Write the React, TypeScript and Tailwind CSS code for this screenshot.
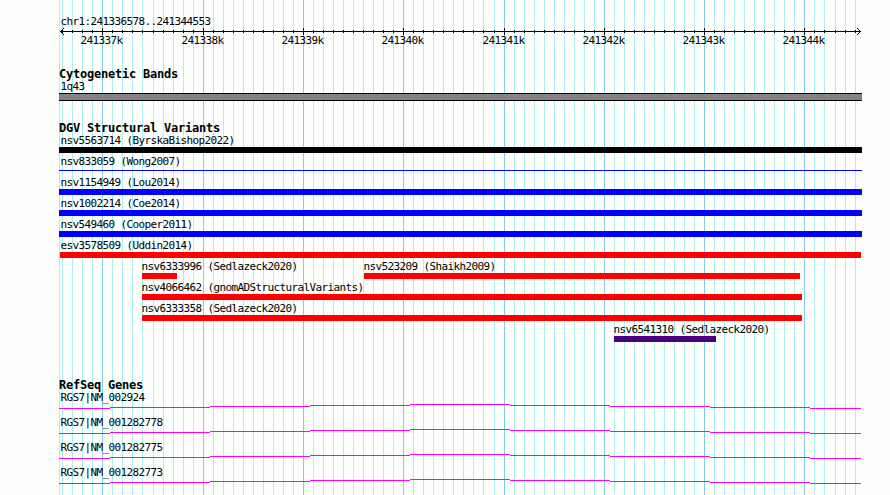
import React from "react";

type Feature = {
  name: string;
  start: number;
  end: number;
  color: string;
  thin?: boolean;
  inset?: number;
};

const LEFT = 59;
const RIGHT = 862;

// One grid line every 100 bp, the scale is slightly over 10px per step
const gridLines = Array.from({ length: 80 }, (_, i) => {
  const shift = (i >= 9 ? 1 : 0) + (i >= 43 ? 1 : 0) + (i >= 77 ? 1 : 0);
  return { x: 62 + i * 10 + shift, major: i % 10 === 4 };
});

const majorLines = gridLines.filter((line) => line.major);

const variantRows: Feature[][] = [
  [{ name: "nsv5563714 (ByrskaBishop2022)", start: 59, end: 862, color: "bg-black", inset: 1.5 }],
  [{ name: "nsv833059 (Wong2007)", start: 59, end: 862, color: "bg-[#0000ff]", thin: true, inset: 1.5 }],
  [{ name: "nsv1154949 (Lou2014)", start: 59, end: 862, color: "bg-[#0000ff]", inset: 1.5 }],
  [{ name: "nsv1002214 (Coe2014)", start: 59, end: 862, color: "bg-[#0000ff]", inset: 1.5 }],
  [{ name: "nsv549460 (Cooper2011)", start: 59, end: 862, color: "bg-[#0000ff]", inset: 1.5 }],
  [{ name: "esv3578509 (Uddin2014)", start: 60, end: 861, color: "bg-[#ff0000]", inset: 0.5 }],
  [
    { name: "nsv6333996 (Sedlazeck2020)", start: 142, end: 177, color: "bg-[#ff0000]", inset: -0.5 },
    { name: "nsv523209 (Shaikh2009)", start: 364, end: 800, color: "bg-[#ff0000]", inset: -0.5 },
  ],
  [{ name: "nsv4066462 (gnomADStructuralVariants)", start: 142, end: 802, color: "bg-[#ff0000]", inset: -0.5 }],
  [{ name: "nsv6333358 (Sedlazeck2020)", start: 142, end: 802, color: "bg-[#ff0000]", inset: -0.5 }],
  [{ name: "nsv6541310 (Sedlazeck2020)", start: 614, end: 716, color: "bg-[#4b0082]", inset: -0.5 }],
];

const genes = [
  "RGS7|NM_002924",
  "RGS7|NM_001282778",
  "RGS7|NM_001282775",
  "RGS7|NM_001282773",
];

// Stepped intron line, x of each break and its height
const intronSteps = [
  [0, 51, 4],
  [51, 151, 3],
  [151, 251, 2],
  [251, 351, 1],
  [351, 451, 0],
  [451, 551, 1],
  [551, 651, 2],
  [651, 751, 3],
  [751, 802, 4],
];

function Grid() {
  return (
    <svg className="absolute inset-0" width="890" height="495" shapeRendering="crispEdges">
      <rect x={LEFT} y="0" width="1" height="495" fill="#afeeee" />
      {gridLines.map(({ x, major }) => (
        <rect key={x} x={x} y="0" width="1" height="495" fill={major ? "#87ceeb" : "#afeeee"} />
      ))}
    </svg>
  );
}

function Ruler() {
  return (
    <div className="h-[67px] pt-[15px]">
      <p className="ml-[60.5px] h-[12px]">chr1:241336578..241344553</p>
      <svg className="block" width="890" height="8" shapeRendering="crispEdges">
        <rect x="60" y="4" width="801" height="1" />
        {gridLines.map(({ x, major }) => (
          <rect key={x} x={x} y={major ? 1 : 3} width="1" height={major ? 7 : 3} />
        ))}
        <path d="M61 3h1v1h-1zM62 2h1v1h-1zM63 1h1v1h-1zM61 5h1v1h-1zM62 6h1v1h-1zM63 7h1v1h-1z" />
        <path d="M859 3h1v1h-1zM858 2h1v1h-1zM857 1h1v1h-1zM859 5h1v1h-1zM858 6h1v1h-1zM857 7h1v1h-1z" />
      </svg>
      <div className="ml-[80.5px] -mt-px flex">
        {majorLines.map(({ x }, i) => (
          <span
            key={x}
            className="shrink-0"
            style={{ width: i < majorLines.length - 1 ? majorLines[i + 1].x - x : 42 }}
          >
            {241337 + i}k
          </span>
        ))}
      </div>
    </div>
  );
}

function TrackTitle({ children }: { children: React.ReactNode }) {
  return (
    <h2 className="ml-[59px] h-[13px] text-[12px] font-bold leading-[15px] tracking-[-0.224px]">
      {children}
    </h2>
  );
}

function VariantRow({ features }: { features: Feature[] }) {
  return (
    <div className="flex h-[21px]">
      {features.map((feature, i) => {
        const previous = i === 0 ? 0 : features[i - 1].end;
        return (
          <div
            key={feature.name}
            className="shrink-0"
            style={{ marginLeft: feature.start - previous, width: feature.end - feature.start }}
          >
            <p className="h-[13px] whitespace-nowrap" style={{ textIndent: feature.inset ?? 0 }}>
              {feature.name}
            </p>
            <div className={`${feature.color} ${feature.thin ? "mt-[2px] h-px" : "h-[6px]"}`} />
          </div>
        );
      })}
    </div>
  );
}

function GeneRow({ name }: { name: string }) {
  return (
    <div className="ml-[59px] h-[25px]">
      <p className="ml-[1.5px] h-[13px]">{name}</p>
      <svg className="block" width={RIGHT - LEFT} height="5" shapeRendering="crispEdges">
        {intronSteps.map(([from, to, y]) => (
          <rect key={from} x={from} y={y} width={to - from} height="1" fill="#ff00ff" />
        ))}
      </svg>
    </div>
  );
}

function App() {
  return (
    <main className="relative h-[495px] w-[890px] overflow-hidden bg-[#fcfffc] font-['DejaVu_Sans_Mono',monospace] text-[11px] leading-[13px] tracking-[-0.622px] text-black">
      <Grid />
      <div className="relative">
        <Ruler />

        <section className="h-[54px]">
          <TrackTitle>Cytogenetic Bands</TrackTitle>
          <p className="ml-[60.5px] h-[13px]">1q43</p>
          <div className="ml-[59px] h-[8px] w-[803px] border-y border-black bg-[#848284]" />
        </section>

        <section className="h-[257px]">
          <TrackTitle>DGV Structural Variants</TrackTitle>
          {variantRows.map((features) => (
            <VariantRow key={features[0].name} features={features} />
          ))}
        </section>

        <section>
          <TrackTitle>RefSeq Genes</TrackTitle>
          {genes.map((name) => (
            <GeneRow key={name} name={name} />
          ))}
        </section>
      </div>
    </main>
  );
}

export default App;
